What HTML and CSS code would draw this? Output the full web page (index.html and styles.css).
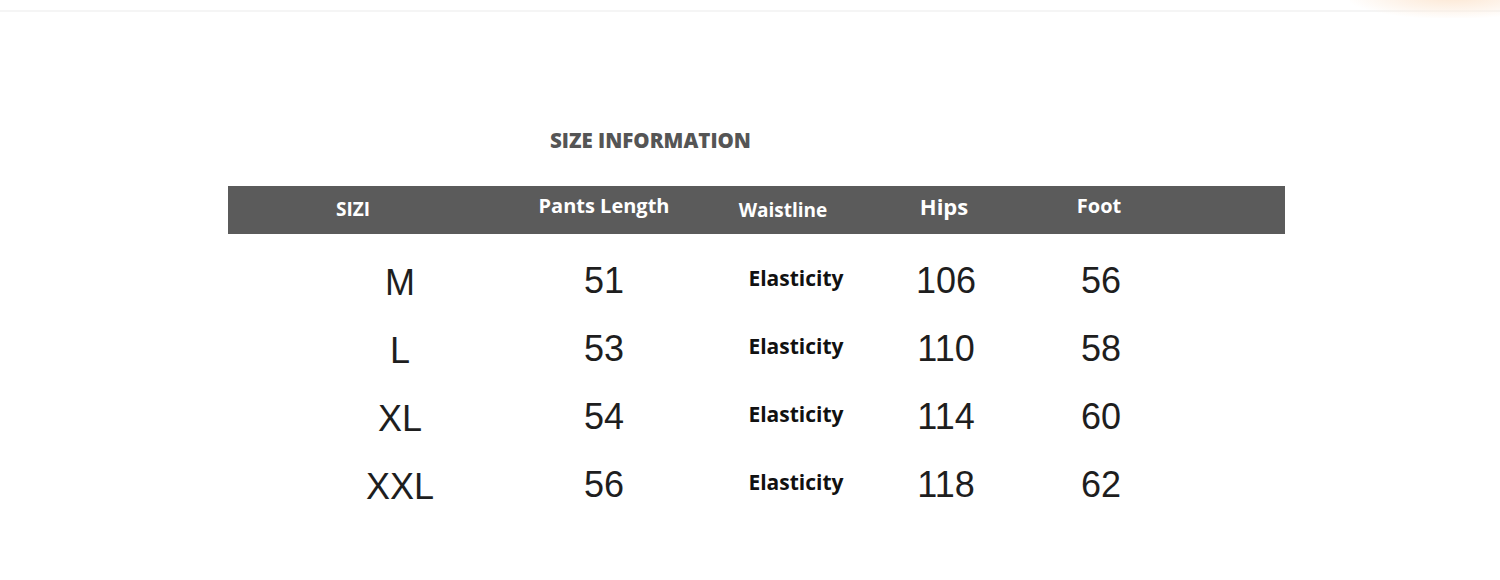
FILE: index.html
```html
<!DOCTYPE html>
<html lang="en">
<head>
<meta charset="utf-8">
<title>Size Information</title>
<link rel="stylesheet" href="styles.css">
</head>
<body>
<div class="page">
  <div class="glow"></div>
  <div class="rule"></div>
  <section class="chart">
    <h2 class="title">SIZE INFORMATION</h2>
    <div class="head">
      <div class="hcell h-size">SIZI</div>
      <div class="hcell h-len">Pants Length</div>
      <div class="hcell h-waist">Waistline</div>
      <div class="hcell h-hips">Hips</div>
      <div class="hcell h-foot">Foot</div>
    </div>
    <div class="rows">
      <div class="row"><div class="cell c-size">M</div><div class="cell">51</div><div class="cell c-el">Elasticity</div><div class="cell">106</div><div class="cell">56</div></div>
      <div class="row"><div class="cell c-size">L</div><div class="cell">53</div><div class="cell c-el">Elasticity</div><div class="cell">110</div><div class="cell">58</div></div>
      <div class="row"><div class="cell c-size">XL</div><div class="cell">54</div><div class="cell c-el">Elasticity</div><div class="cell">114</div><div class="cell">60</div></div>
      <div class="row"><div class="cell c-size">XXL</div><div class="cell">56</div><div class="cell c-el">Elasticity</div><div class="cell">118</div><div class="cell">62</div></div>
    </div>
  </section>
</div>
</body>
</html>
```
FILE: styles.css
```css
html, body {
  margin: 0;
  padding: 0;
  background: #ffffff;
}

.page {
  position: relative;
  width: 1500px;
  height: 580px;
  overflow: hidden;
  padding-top: 10px;
  box-sizing: border-box;
}

.glow {
  position: absolute;
  top: -10px;
  right: -20px;
  width: 170px;
  height: 28px;
  background: radial-gradient(ellipse at 60% 20%, rgba(252, 228, 205, 0.9) 0%, rgba(253, 238, 224, 0.6) 45%, rgba(255, 255, 255, 0) 75%);
}

.rule {
  height: 2px;
  background: #f5f5f5;
}

.chart {
  margin-left: 228px;
  width: 1057px;
}

.title {
  margin: 115px 0 0 322px;
  font-family: "Open Sans", "Liberation Sans", sans-serif;
  font-weight: 800;
  font-size: 20.5px;
  line-height: 26px;
  color: #555555;
}

.head {
  margin-top: 33px;
  height: 48px;
  background: #5b5b5b;
  display: grid;
  grid-template-columns: 250px 252px 134px 164px 146px 1fr;
  font-family: "Open Sans", "Liberation Sans", sans-serif;
  font-weight: 700;
  color: #ffffff;
}

.hcell {
  text-align: center;
  line-height: 40px;
  font-size: 20px;
}

.h-size { font-size: 19px; padding-top: 3px; }
.h-len { font-size: 20px; }
.h-waist { font-size: 19px; padding: 4px 28px 0 0; }
.h-hips { font-size: 22px; padding-right: 4px; }
.h-foot { font-size: 20px; padding-right: 4px; }

.rows {
  margin-top: 13px;
}

.row {
  display: grid;
  grid-template-columns: 250px 252px 134px 164px 146px 1fr;
  height: 68px;
}

.cell {
  text-align: center;
  font-family: "Liberation Sans", Arial, sans-serif;
  font-size: 36px;
  line-height: 68px;
  color: #1e1e1e;
}

.c-size {
  padding-left: 94px;
  padding-top: 2px;
}

.c-el {
  font-family: "Open Sans", "Liberation Sans", sans-serif;
  font-weight: 700;
  font-size: 21px;
  line-height: 62px;
  color: #111111;
  padding-right: 2px;
}
```
